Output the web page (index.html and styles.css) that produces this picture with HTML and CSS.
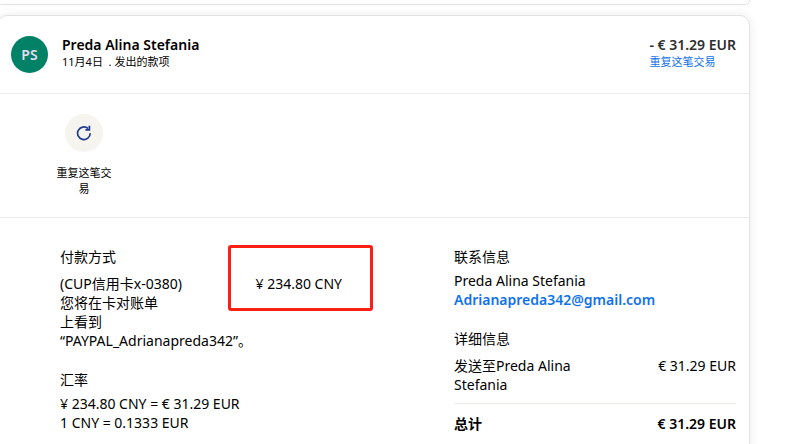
FILE: index.html
```html
<!DOCTYPE html>
<html lang="zh-CN">
<head>
    <meta charset="UTF-8">
    <meta name="viewport" content="width=device-width, initial-scale=1.0">
    <title>交易详情</title>
    <link rel="stylesheet" href="styles.css">
</head>
<body>
    <main class="page">
        <div class="card card-previous"></div>

        <article class="card">
            <header class="summary">
                <div class="avatar">PS</div>
                <div class="summary-info">
                    <h2 class="name">Preda Alina Stefania</h2>
                    <p class="small">11月4日&nbsp; . 发出的款项</p>
                </div>
                <div class="summary-amount">
                    <p class="amount">- € 31.29 EUR</p>
                    <a class="small" href="#">重复这笔交易</a>
                </div>
            </header>

            <div class="actions">
                <button class="action" type="button">
                    <span class="action-icon">
                        <svg width="16" height="16" viewBox="0 0 16 16" fill="none" stroke="#1f3a93" stroke-width="1.7">
                            <path d="M14.2 8.2A6.3 6.3 0 1 1 12 3.5"/>
                            <path d="M13.4 .8V4.8H9.4"/>
                        </svg>
                    </span>
                    <span class="action-label">重复这笔交易</span>
                </button>
            </div>

            <div class="details">
                <div class="column">
                    <section>
                        <h3>付款方式</h3>
                        <div class="row">
                            <p>(CUP信用卡x-0380)<br>您将在卡对账单<br>上看到<br>“PAYPAL_Adrianapreda342”。</p>
                            <p class="price marked">¥ 234.80 CNY</p>
                        </div>
                    </section>
                    <section>
                        <h3>汇率</h3>
                        <p>¥ 234.80 CNY = € 31.29 EUR</p>
                        <p>1 CNY = 0.1333 EUR</p>
                    </section>
                </div>

                <div class="column">
                    <section>
                        <h3>联系信息</h3>
                        <p>Preda Alina Stefania</p>
                        <a class="email" href="mailto:Adrianapreda342@gmail.com">Adrianapreda342@gmail.com</a>
                    </section>
                    <section>
                        <h3>详细信息</h3>
                        <div class="row">
                            <p class="recipient">发送至Preda Alina Stefania</p>
                            <p class="price">€ 31.29 EUR</p>
                        </div>
                        <div class="row total">
                            <p>总计</p>
                            <p class="price">€ 31.29 EUR</p>
                        </div>
                    </section>
                </div>
            </div>
        </article>
    </main>
</body>
</html>
```

FILE: styles.css
```css
*, *::after {
    box-sizing: border-box;
}
body {
    margin: 0;
    overflow: hidden;
    background: #fff;
    color: #000;
    font-family: "Noto Sans", "Noto Sans CJK SC", sans-serif;
    font-size: 14px;
    line-height: 19px;
}
h2, h3, p {
    margin: 0;
    font-size: 14px;
    font-weight: 400;
}
a {
    color: #1072eb;
    text-decoration: none;
}
.page {
    display: flex;
    flex-direction: column;
    gap: 10px;
    margin-left: -3px;
    padding-right: 37px;
}
.card {
    border: 1px solid #e2e2e2;
    border-radius: 10px;
    background: #fff;
    box-shadow: 0 0 12px rgba(0, 0, 0, 0.08);
}
.card-previous {
    height: 5px;
    border-top: 0;
    border-radius: 0 0 10px 10px;
    box-shadow: none;
}
.summary {
    display: flex;
    align-items: center;
    padding: 18px 13px 20px;
    border-bottom: 1px solid #ebebeb;
}
.avatar {
    display: flex;
    align-items: center;
    justify-content: center;
    width: 37px;
    height: 37px;
    margin: 2px 14px 0 0;
    border-radius: 50%;
    background: #018267;
    color: #e4dcf4;
    font-weight: 600;
}
.summary-info {
    flex: 1;
}
.name, .amount {
    font-weight: 600;
}
.amount {
    color: #2c2e2f;
}
.small {
    display: block;
    padding-bottom: 2px;
    font-size: 11px;
    line-height: 16px;
}
.actions {
    padding: 20px 55px;
    border-bottom: 1px solid #ebebeb;
}
.action {
    display: flex;
    flex-direction: column;
    align-items: center;
    gap: 13px;
    width: 62px;
    padding: 0;
    border: 0;
    background: none;
    color: #000;
    font: inherit;
}
.action-icon {
    display: flex;
    align-items: center;
    justify-content: center;
    width: 38px;
    height: 38px;
    border-radius: 50%;
    background: #f5f4ef;
}
.action-label {
    font-size: 11px;
    line-height: 16px;
}
.details {
    display: grid;
    grid-template-columns: 1fr 1fr;
    gap: 112px;
    padding: 29px 13px 29px 62px;
}
.column {
    display: flex;
    flex-direction: column;
    gap: 20px;
}
h3 {
    margin-bottom: 5px;
}
.row {
    display: flex;
    align-items: flex-start;
    justify-content: space-between;
    padding-top: 3px;
}
.row p {
    white-space: nowrap;
}
.row .recipient {
    width: 140px;
    white-space: normal;
}
/* red frame drawn round the charged amount */
.marked {
    position: relative;
}
.marked::after {
    content: "";
    position: absolute;
    top: -29px;
    right: -31px;
    width: 145px;
    height: 66px;
    border: 3px solid #fb1f14;
    border-radius: 3px;
}
.email {
    font-weight: 600;
}
.total {
    margin-top: 9px;
    padding-top: 10px;
    border-top: 1px solid #ebebe6;
}
.total p {
    font-weight: 600;
}
```
